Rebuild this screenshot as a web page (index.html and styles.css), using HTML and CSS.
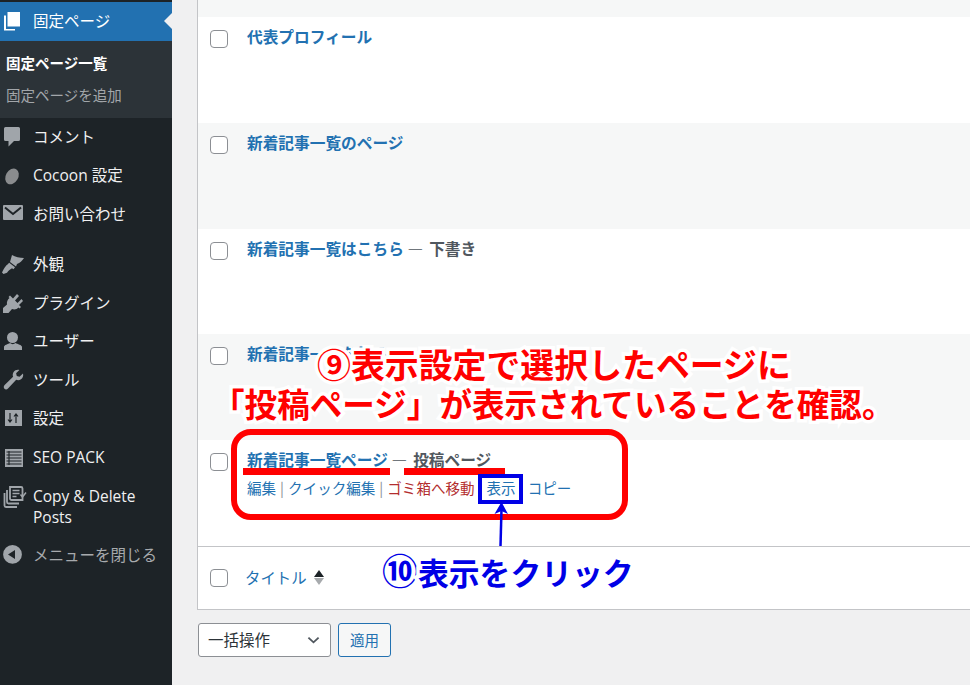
FILE: index.html
```html
<!DOCTYPE html>
<html lang="ja">
<head>
<meta charset="utf-8">
<title>固定ページ</title>
<link rel="stylesheet" href="styles.css">
</head>
<body>
<div class="app">
  <nav class="sidebar">
    <div class="menu-item active">
      <svg class="icon" viewBox="0 0 22 22"><path d="M5.500 1H18v14.500H5.500z"/><path d="M2 4.500h2V18h9v1.500H2z"/></svg>
      <span>固定ページ</span>
    </div>
    <div class="submenu">
      <div class="sub current">固定ページ一覧</div>
      <div class="sub">固定ページを追加</div>
    </div>
    <div class="menu-item">
      <svg class="icon" viewBox="0 0 22 22"><path d="M3.500 1h13A1.500 1.500 0 0 1 18 2.500v11a1.500 1.500 0 0 1-1.500 1.500H12l-5.500 5.500V15h-3A1.500 1.500 0 0 1 2 13.500v-11A1.500 1.500 0 0 1 3.500 1z"/></svg>
      <span>コメント</span>
    </div>
    <div class="menu-item">
      <svg class="icon cocoon" viewBox="0 0 22 22"><ellipse cx="10" cy="11.400" rx="6.200" ry="8.400" transform="rotate(30 10 11.400)"/></svg>
      <span>Cocoon 設定</span>
    </div>
    <div class="menu-item">
      <svg class="icon" viewBox="0 0 22 22"><rect x="1" y="2" width="20" height="15" rx="1"/><path d="M3 4.500l8 6.500 8-6.500" fill="none" stroke="#1d2327" stroke-width="2"/></svg>
      <span>お問い合わせ</span>
    </div>
    <div class="menu-sep"></div>
    <div class="menu-item">
      <svg class="icon" viewBox="0 0 22 22"><path d="M10 1c3 2 8 3 12 3-2 3-4 5-7 6l-1 2.500L8 8z"/><path d="M7.200 8.800l5.800 4.400-1.500 2-1.500-1c-2 1-4 3-5 4.500L1.500 20 0 18.500l1.500-3C3 13 4 11.500 5.500 10.500z"/></svg>
      <span>外観</span>
    </div>
    <div class="menu-item">
      <svg class="icon" viewBox="0 0 22 22"><path d="M1 21v-5l4-3.500c-.5-2.500.5-5 2.500-6.500l-1-1L8 3.500l3 3L15 2l2 2-4 4.500 2.500 2.500 4-4L21 9l-4 4 2 2-1.500 1.500-1-1c-1.500 2-4.500 2.500-6.500 1.500L6.500 21z"/></svg>
      <span>プラグイン</span>
    </div>
    <div class="menu-item">
      <svg class="icon" viewBox="0 0 22 22"><circle cx="10.500" cy="6.500" r="5.500"/><path d="M2 19v-3c0-2 4-3 6-4 1.500 1.500 4 1.500 5.500 0 2 1 6.500 2 6.500 4v3z"/></svg>
      <span>ユーザー</span>
    </div>
    <div class="menu-item">
      <svg class="icon" viewBox="0 0 22 22"><path d="M21 4.500c.6 2.300-.2 4.500-2 5.800-1.500 1-3.300 1.100-4.800.5L6 19.500c-1.100 1.200-2.700 1.200-3.600.2s-.9-2.400.2-3.600l8.500-8.300c-.6-1.500-.5-3.300.5-4.800 1.300-1.800 3.500-2.600 5.800-2l-3.300 3.300.7 2.700 2.700.7z"/></svg>
      <span>ツール</span>
    </div>
    <div class="menu-item">
      <svg class="icon" viewBox="0 0 22 22"><rect x="3" y="2" width="17" height="16"/><path d="M8 5v9M6 11.500l2 2.500 2-2.500M14 15V6M12 8.500L14 6l2 2.500" fill="none" stroke="#1d2327" stroke-width="1.200"/></svg>
      <span>設定</span>
    </div>
    <div class="menu-item">
      <svg class="icon" viewBox="0 0 22 22"><rect x="3" y="2" width="18" height="18"/><path d="M7 4v14M4.500 5h15M4.500 8h15M4.500 11h15M4.500 14h15M4.500 17h15" fill="none" stroke="#1d2327" stroke-width="1.100"/></svg>
      <span>SEO PACK</span>
    </div>
    <div class="menu-item tall">
      <svg class="icon wide" viewBox="0 0 22 22"><path d="M8 1h11a1.500 1.500 0 0 1 1.500 1.500V14H9.500A1.500 1.500 0 0 1 8 12.500z" fill="none" stroke="#a0a5aa" stroke-width="1.800"/><path d="M5 4v12a1.500 1.500 0 0 0 1.500 1.500H17M2.500 7v12.500A1.500 1.500 0 0 0 4 21h11" fill="none" stroke="#a0a5aa" stroke-width="1.800"/><path d="M10.500 4.500h7M10.500 7.500h7M10.500 10.500h4" fill="none" stroke="#a0a5aa" stroke-width="1.500"/><path d="M18.500 8.500l2 2.500 3.500-4.500" fill="none" stroke="#a0a5aa" stroke-width="1.500"/></svg>
      <span>Copy &amp; Delete Posts</span>
    </div>
    <div class="menu-item collapse">
      <svg class="icon" viewBox="0 0 22 22"><path fill-rule="evenodd" d="M10.500 1a9.400 9.400 0 1 1 0 18.800 9.400 9.400 0 0 1 0-18.800zM13 6L6 10.500l7 4.500z"/></svg>
      <span>メニューを閉じる</span>
    </div>
  </nav>

  <main class="content">
    <section class="list">
      <div class="row alt stub"></div>
      <div class="row">
        <input class="check" type="checkbox">
        <div class="cell"><a class="title">代表プロフィール</a></div>
      </div>
      <div class="row alt">
        <input class="check" type="checkbox">
        <div class="cell"><a class="title">新着記事一覧のページ</a></div>
      </div>
      <div class="row">
        <input class="check" type="checkbox">
        <div class="cell"><a class="title">新着記事一覧はこちら</a> <span class="state">— 下書き</span></div>
      </div>
      <div class="row alt">
        <input class="check" type="checkbox">
        <div class="cell"><a class="title">新着記事一覧を見るページ</a></div>
      </div>
      <div class="row">
        <input class="check" type="checkbox">
        <div class="cell">
          <a class="title">新着記事一覧ページ</a> <span class="state">— 投稿ページ</span>
          <div class="actions">
            <a>編集</a> <i>|</i> <a>クイック編集</a> <i>|</i> <a class="trash">ゴミ箱へ移動</a> <i>|</i> <a>表示</a> <i>|</i> <a>コピー</a>
          </div>
        </div>
      </div>
      <div class="foot">
        <input class="check" type="checkbox">
        <a class="sort">タイトル</a>
        <span class="arrows"><b class="up"></b><b class="down"></b></span>
      </div>
    </section>
    <div class="bulk">
      <div class="select">一括操作
        <svg viewBox="0 0 14 8" class="chev"><path d="M1.500 1.500L7 6.500l5.500-5" fill="none" stroke="#50575e" stroke-width="2"/></svg>
      </div>
      <button class="apply">適用</button>
    </div>
  </main>
</div>

<div class="note red line-1">⑨表示設定で選択したページに</div>
<div class="note red line-2">「投稿ページ」が表示されていることを確認。</div>
<div class="frame"></div>
<div class="under under-a"></div>
<div class="under under-b"></div>
<div class="blue-box"></div>
<svg class="arrow" viewBox="0 0 20 46"><path d="M9.500 45L10.500 8" stroke="#0000e6" stroke-width="2.500" fill="none"/><path d="M10.500 1L17 13 10.500 10 3.500 13z" fill="#0000e6"/></svg>
<div class="note blue line-3"><span class="num">⑩</span>表示をクリック</div>
</body>
</html>
```
FILE: styles.css
```css
* { box-sizing: border-box; }
html, body { margin: 0; padding: 0; height: 685px; overflow: hidden; }
body {
  position: relative;
  background: #f0f0f1;
  font-family: "Noto Sans CJK JP", "Open Sans", sans-serif;
  color: #3c434a;
}
.app { display: flex; width: 970px; height: 685px; overflow: hidden; }

/* sidebar */
.sidebar {
  flex: 0 0 172px;
  background: #1d2327;
  padding-top: 2px;
  color: #f0f0f1;
  font-family: "Open Sans", "Noto Sans CJK JP", sans-serif;
}
.menu-item {
  display: flex;
  align-items: center;
  height: 38.600px;
  padding-left: 2px;
  font-size: 15.500px;
  line-height: 21px;
  position: relative;
}
.menu-item .icon { flex: 0 0 22px; width: 22px; height: 22px; fill: #a0a5aa; margin-right: 9px; overflow: visible; }
.menu-item .icon.cocoon { fill: #8a8c8e; }
.menu-item.active { background: #2271b1; color: #fff; height: 39px; }
.menu-item.active .icon { fill: #fff; }
.menu-item.active::after {
  content: "";
  position: absolute;
  right: 0;
  top: 11px;
  border: 8px solid transparent;
  border-right-color: #f0f0f1;
  border-left-width: 0;
}
.menu-item.tall { height: 59px; align-items: flex-start; padding-top: 9px; }
.menu-item.tall span { width: 125px; }
.menu-item.collapse { color: #a7aaad; }
.menu-sep { height: 11.500px; }
.submenu { background: #2c3338; height: 77px; padding-top: 7px; }
.sub {
  height: 32px;
  line-height: 32px;
  padding-left: 6px;
  font-size: 14.500px;
  color: #a2a6aa;
}
.sub.current { color: #fff; font-weight: 700; }

/* list */
.content { flex: 1; padding-left: 25px; min-width: 0; }
.list {
  width: 800px;
  background: #fff;
  border: 1px solid #c3c4c7;
  border-top: 0;
  border-right: 0;
  margin-bottom: 13px;
}
.row {
  display: flex;
  height: 105.800px;
  padding: 13px 0 0 12px;
  background: #fff;
}
.row.alt { background: #f6f7f7; }
.row.stub { height: 17px; padding: 0; }
.check {
  appearance: none;
  flex: 0 0 18px;
  width: 18px;
  height: 18px;
  margin: 0;
  background: #fff;
  border: 1px solid #8c8f94;
  border-radius: 4px;
}
.cell { margin-left: 19px; font-size: 15.700px; line-height: 22px; margin-top: -4px; }
.title { color: #2271b1; font-weight: 700; }
.state { font-weight: 700; color: #50575e; word-spacing: 2.500px; }
.actions { margin-top: 6px; font-size: 14.550px; line-height: 22px; color: #2271b1; white-space: nowrap; word-spacing: .75px; }
.actions i { font-style: normal; color: #8c8f94; }
.actions .trash { color: #b32d2e; }
.foot {
  display: flex;
  align-items: center;
  height: 63px;
  padding-left: 12px;
  border-top: 1px solid #c3c4c7;
}
.sort { margin: -2px 0 0 17px; color: #2271b1; font-size: 15.400px; line-height: 22px; }
.arrows { display: flex; flex-direction: column; gap: 1px; margin-left: 7px; }
.arrows b { width: 0; height: 0; border: 5.500px solid transparent; border-top-width: 0; border-bottom-width: 7px; }
.arrows .up { border-bottom-color: #1d2327; }
.arrows .down { border-bottom-width: 0; border-top: 7px solid #a7aaad; }
.bulk { display: flex; gap: 7px; padding-left: 1px; }
.select {
  display: flex;
  align-items: center;
  justify-content: space-between;
  width: 133px;
  height: 34px;
  padding: 0 10px 2px 9px;
  background: #fff;
  border: 1px solid #8c8f94;
  border-radius: 3px;
  color: #2c3338;
  font-size: 15.500px;
}
.chev { width: 13px; height: 8px; margin-top: 2px; }
.apply {
  width: 53px;
  height: 34px;
  padding: 0;
  background: #f6f7f7;
  border: 1px solid #2271b1;
  border-radius: 3px;
  color: #2271b1;
  font: 14.500px "Noto Sans CJK JP", sans-serif;
}

/* annotations drawn over the screenshot */
.note {
  position: absolute;
  white-space: nowrap;
  font-weight: 700;
  line-height: 38px;
  paint-order: stroke fill;
  -webkit-text-stroke: 7px #fff;
}
.red { color: #f00; }
.blue { color: #0000e6; }
.line-1 { left: 317px; top: 345px; font-size: 33.900px; }
.line-2 { left: 212px; top: 384px; font-size: 32.600px; }
.line-3 { left: 382px; top: 550px; font-size: 30.800px; }
.num { font-size: 36px; }
.frame {
  position: absolute;
  left: 231px;
  top: 429px;
  width: 397px;
  height: 91px;
  border: 6px solid #f00;
  border-radius: 20px;
}
.under { position: absolute; height: 7px; background: #f00; }
.under-a { left: 243px; top: 468px; width: 147px; }
.under-b { left: 404px; top: 468px; width: 101px; }
.blue-box {
  position: absolute;
  left: 478px;
  top: 474px;
  width: 45px;
  height: 30px;
  border: 4px solid #0000e6;
}
.arrow { position: absolute; left: 491px; top: 501px; width: 20px; height: 46px; }
```
